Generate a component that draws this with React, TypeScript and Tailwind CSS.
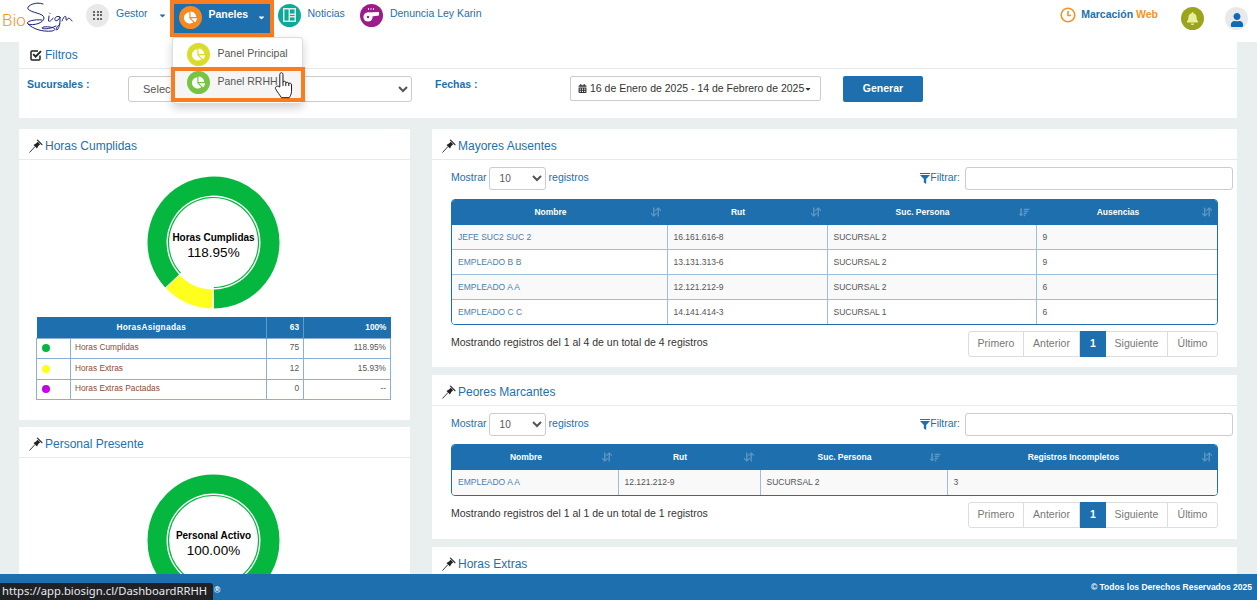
import React from "react";
import { BsArrowDownUp, BsSortDown } from "react-icons/bs";
import { FaChartPie, FaCalendarAlt, FaBell, FaUser, FaCaretDown } from "react-icons/fa";

function pt(a: number, r: number, c: number) {
  const t = (a * Math.PI) / 180;
  return `${(c + r * Math.sin(t)).toFixed(2)} ${(c - r * Math.cos(t)).toFixed(2)}`;
}
function arc(a0: number, a1: number, r: number, c: number) {
  const large = a1 - a0 > 180 ? 1 : 0;
  return `M ${pt(a0, r, c)} A ${r} ${r} 0 ${large} 1 ${pt(a1, r, c)}`;
}

function Pin() {
  return (
    <svg width="14" height="14" viewBox="0 0 14 14" className="text-[#222]" fill="currentColor">
      <path d="M0.5 13.5 L6 7.5" stroke="currentColor" strokeWidth="0.9" fill="none" />
      <path d="M4.5 6 L8 9.5 L9.3 7 L11.2 5.2 L8.7 2.7 L7 4.6 Z" />
      <path d="M7.6 1 L8.6 0.4 L13.6 5.4 L13 6.4 Z" />
    </svg>
  );
}

function CheckBoxIcon() {
  return (
    <svg width="12" height="12" viewBox="0 0 12 12" fill="none" stroke="#222">
      <path d="M10 6.5 V10 Q10 11 9 11 H2 Q1 11 1 10 V3 Q1 2 2 2 H8" strokeWidth="1.5" />
      <path d="M3.2 5.2 L5.6 7.6 L11 2.2" strokeWidth="1.9" />
    </svg>
  );
}

function FilterIcon() {
  return (
    <svg width="10" height="11" viewBox="0 0 10 11" fill="#1d6fad">
      <rect x="0" y="0" width="10" height="1" />
      <path d="M0 2 H10 L6.2 6 V11 L3.8 9.5 V6 Z" />
    </svg>
  );
}

function NewsIcon() {
  return (
    <svg width="13" height="14" viewBox="0 0 13 14">
      <rect x="0" y="0" width="13" height="14" fill="#d8efe9" />
      <rect x="1.5" y="1.5" width="4" height="11" fill="#0fa99a" />
      <rect x="7" y="1.5" width="4.5" height="4" fill="#0fa99a" />
      <rect x="7" y="7" width="4.5" height="1" fill="#0fa99a" />
      <rect x="7" y="9.5" width="4.5" height="3" fill="#0fa99a" />
    </svg>
  );
}

function WhistleIcon() {
  return (
    <svg width="18" height="16" viewBox="0 0 18 16" fill="#fff">
      <circle cx="6" cy="10" r="4.6" />
      <path d="M5 5.6 L17 5 V8.4 L9.5 9.5 Z" />
      <circle cx="6" cy="10" r="1.2" fill="#9c1c8c" />
      <path d="M6.5 1 V3 M9 1 V3 M11.5 1 V3" stroke="#fff" strokeWidth="0.8" />
    </svg>
  );
}

function HandCursor() {
  return (
    <svg width="19" height="28" viewBox="0 0 18 26" fill="#fff" stroke="#111" strokeWidth="0.9" strokeLinejoin="round">
      <path d="M5.5 15 V3.2 C5.5 .8 8.5 .8 8.5 3.2 V10.5 C8.5 9 11.2 9 11.2 10.8 V11.5 C11.2 10 14 10 14 12 C14 10.8 16.6 11 16.6 13 V19 C16.6 22 15 24 14.5 25 H7 C6 23 2.5 19 1.5 16.5 C.8 14.5 3.5 13 5.5 15 Z" />
      <path d="M8.5 10.5 V14 M11.2 11.5 V14 M14 12 V14" fill="none" />
    </svg>
  );
}

function Donut({ label, value, extra }: { label: string; value: string; extra?: number }) {
  const c = 66.5;
  return (
    <div className="relative w-[133px] h-[133px]">
      <svg width="133" height="133" viewBox="0 0 133 133" className="block">
        {extra ? (
          <>
            <path d={arc(181, 180 + extra - 1, 56.5, c)} fill="none" stroke="#ffff1e" strokeWidth="19" />
            <path d={arc(180 + extra, 539.5, 56.5, c)} fill="none" stroke="#06b73f" strokeWidth="19" />
            <path d={arc(180 + extra, 539.5, 45, c)} fill="none" stroke="#06b73f" strokeWidth="1.2" />
          </>
        ) : (
          <>
            <circle cx={c} cy={c} r="56.5" fill="none" stroke="#06b73f" strokeWidth="19" />
            <circle cx={c} cy={c} r="45" fill="none" stroke="#06b73f" strokeWidth="1.2" />
          </>
        )}
      </svg>
      <div className="absolute inset-0 flex flex-col items-center justify-center pt-[7px]">
        <span className="text-[10px] leading-[12px] font-bold text-black whitespace-nowrap">{label}</span>
        <span className="text-[13.5px] leading-[17px] text-black">{value}</span>
      </div>
    </div>
  );
}

function Card({ title, icon, className, head = "h-[31px] pt-[3px]", children }: { title: string; icon?: React.ReactNode; className?: string; head?: string; children?: React.ReactNode }) {
  return (
    <section className={`bg-white ${className ?? ""}`}>
      <div className={`${head} border-b border-[#e7eaec] flex items-center pl-[10px] gap-[2px] text-[12px] text-[#1d6fad]`}>
        <span className="w-[14px] flex justify-center">{icon ?? <Pin />}</span>
        <span>{title}</span>
      </div>
      {children}
    </section>
  );
}

function Circle({ bg, children }: { bg: string; children?: React.ReactNode }) {
  return <span className={`w-[23px] h-[23px] rounded-full flex items-center justify-center shrink-0 ${bg}`}>{children}</span>;
}

function Controls() {
  return (
    <div className="flex items-center justify-between pl-[19px] pr-[4px] h-[23px] text-[10.5px] text-[#1d6fad]">
      <div className="flex items-center">
        <span className="pb-[1px]">Mostrar</span>
        <select className="w-[57px] h-[23px] ml-[2px] mr-[3px] border border-[#ccc] rounded-[3px] bg-white text-[10px] text-[#555] pl-[6px]">
          <option>10</option>
        </select>
        <span className="pb-[1px]">registros</span>
      </div>
      <div className="flex items-center">
        <FilterIcon />
        <span className="mr-[5px] pb-[1px]">Filtrar:</span>
        <div className="w-[268px] h-[23px] border border-[#ccc] rounded-[3px] bg-white" />
      </div>
    </div>
  );
}

function Pager() {
  const items = [
    { t: "Primero", w: "w-[56px]" },
    { t: "Anterior", w: "w-[57px]" },
    { t: "1", w: "w-[26px]", on: true },
    { t: "Siguiente", w: "w-[63px]" },
    { t: "Último", w: "w-[51px]" },
  ];
  return (
    <div className="flex h-[26px] text-[10.5px]">
      {items.map((i) =>
        i.on ? (
          <span key={i.t} className={`${i.w} relative z-10 flex items-center justify-center bg-[#1d6fad] text-white font-bold`}>{i.t}</span>
        ) : (
          <span key={i.t} className={`${i.w} flex items-center justify-center border border-[#ddd] -ml-px first:ml-0 first:rounded-l-[3px] last:rounded-r-[3px] text-[#777] bg-white`}>{i.t}</span>
        )
      )}
    </div>
  );
}

function DataTable({ cols, heads, rows, sortIdx }: { cols: string[]; heads: string[]; rows: string[][]; sortIdx: number }) {
  return (
    <div className="mx-[19px] border border-[#1d6fad] rounded-[4px] overflow-hidden">
      <table className="w-full table-fixed border-collapse text-[8.5px]">
        <colgroup>
          {cols.map((c, i) => <col key={i} className={c} />)}
        </colgroup>
        <thead>
          <tr className="h-[25px] bg-[#1d6fad] text-white">
            {heads.map((h, i) => (
              <th key={h} className="relative font-bold text-center pr-[18px] pb-[1px]">
                {h}
                <span className="absolute right-[6px] top-[7px] text-white opacity-30">
                  {i === sortIdx ? <BsSortDown size={11} strokeWidth={1} /> : <BsArrowDownUp size={10} strokeWidth={1} />}
                </span>
              </th>
            ))}
          </tr>
        </thead>
        <tbody>
          {rows.map((r, i) => (
            <tr key={i} className={`h-[24.75px] ${i % 2 === 0 ? "bg-[#f9f9f9]" : "bg-white"} ${i > 0 ? "border-t border-[#9dbfdb]" : ""}`}>
              {r.map((c, j) => (
                <td key={j} className={`pl-[6px] ${j > 0 ? "border-l border-[#9dbfdb]" : ""} ${j === 0 ? "text-[#4a7fae]" : "text-[#555]"}`}>{c}</td>
              ))}
            </tr>
          ))}
        </tbody>
      </table>
    </div>
  );
}

function Summary() {
  const rows = [
    { dot: "bg-[#06b73f]", n: "Horas Cumplidas", v: "75", p: "118.95%" },
    { dot: "bg-[#ffff1e]", n: "Horas Extras", v: "12", p: "15.93%" },
    { dot: "bg-[#c800e6]", n: "Horas Extras Pactadas", v: "0", p: "--" },
  ];
  return (
    <table className="w-[354px] table-fixed border-collapse text-[8.3px] ml-[18px]">
      <colgroup>
        <col className="w-[34px]" />
        <col className="w-[196px]" />
        <col className="w-[37px]" />
        <col className="w-[87px]" />
      </colgroup>
      <thead>
        <tr className="h-[21px] bg-[#1d6fad] text-white font-bold">
          <td colSpan={2} className="text-center tracking-[0.3px]">HorasAsignadas</td>
          <td className="text-right pr-[4px] border-l border-[#5f9bc9]">63</td>
          <td className="text-right pr-[4px] border-l border-[#5f9bc9]">100%</td>
        </tr>
      </thead>
      <tbody>
        {rows.map((r) => (
          <tr key={r.n} className="h-[20.5px]">
            <td className="border border-[#8ab0d6] pl-[5px]">
              <span className={`block w-[8px] h-[8px] rounded-full ${r.dot}`} />
            </td>
            <td className="border border-[#8ab0d6] pl-[4px] pb-[2px] text-[#8a4b3c]">{r.n}</td>
            <td className="border border-[#8ab0d6] text-right pr-[4px] pb-[2px] text-[#555]">{r.v}</td>
            <td className="border border-[#8ab0d6] text-right pr-[4px] pb-[2px] text-[#555]">{r.p}</td>
          </tr>
        ))}
      </tbody>
    </table>
  );
}

function Logo() {
  return (
    <div className="relative w-[75px] h-[36px] shrink-0">
      <span className="absolute left-[2px] top-[10px] text-[17px] leading-[20px] text-[#f6931e] font-light font-['Roboto',sans-serif]">Bio</span>
      <svg width="76" height="36" viewBox="0 0 76 36" className="absolute left-0 top-0" fill="none" stroke="#1b2170" strokeWidth="1" strokeLinecap="round">
        <path d="M43 4 C 36 1 26 6 28 9 C 31 13 44 13 44 18 C 44 23 33 26 28 24 C 25 22 33 19 42 20" />
        <path d="M28 24 C 33 29 42 32 52 31 C 60 29 50 26 44 27 C 38 28 46 31 56 26" />
        <path d="M49 16 L 48.5 21 C 50 22 52 20 53 18 M 49.5 13 L 50 13.5" />
        <path d="M60 17 C 57 15 54 18 55 20 C 56 22 59 20 60 17 C 60 22 60 27 57 30 C 55 30 57 26 60 24" />
        <path d="M62 21 C 63 18 65 15 66 17 C 66 19 66 21 67 20 C 68 17 70 18 72 21" />
      </svg>
    </div>
  );
}

function Header() {
  return (
    <header className="h-[42px] bg-white flex items-start shrink-0 text-[10.5px] relative">
      <Logo />
      <div className="flex items-center h-[30px] ml-[11px]">
        <Circle bg="bg-[#e9e9e9]">
          <span className="grid grid-cols-3 gap-[1.5px]">
            {Array.from({ length: 9 }).map((_, i) => <span key={i} className="w-[2px] h-[2px] bg-[#666]" />)}
          </span>
        </Circle>
        <span className="ml-[7px] pb-[2px] text-[#1d6fad]">Gestor</span>
        <FaCaretDown size={9} className="ml-[10px] text-[#1d6fad]" />
      </div>
      <div className="relative ml-[3px] w-[104px] h-[37px] border-[4px] border-[#f97c1e] shrink-0">
        <div className="h-full bg-[#1d6fad] flex items-center pb-[3px] pl-[5px] text-white font-bold">
          <Circle bg="bg-[#f6891f]"><FaChartPie size={13} className="text-white" /></Circle>
          <span className="ml-[7px] pb-[4px]">Paneles</span>
          <FaCaretDown size={9} className="ml-[9px]" />
        </div>
        <div className="absolute left-[-2px] top-[33px] z-20 w-[131px] h-[67px] bg-white border border-[#ddd] rounded-[3px] shadow-[0_4px_10px_rgba(0,0,0,0.18)] font-normal text-[#555]">
          <div className="h-[32px] flex items-center pl-[14px]">
            <Circle bg="bg-[#d9dc2b]"><FaChartPie size={13} className="text-white" /></Circle>
            <span className="ml-[8px]">Panel Principal</span>
          </div>
          <div className="h-[30px] flex items-center pl-[14px] bg-[#f5f5f5] pb-[6px]">
            <Circle bg="bg-[#76c442]"><FaChartPie size={13} className="text-white" /></Circle>
            <span className="ml-[8px]">Panel RRHH</span>
          </div>
        </div>
        <div className="absolute left-[-3px] top-[63px] z-30 w-[134px] h-[35px] border-[4px] border-[#f97c1e]" />
        <div className="absolute left-[100px] top-[67px] z-40">
          <HandCursor />
        </div>
      </div>
      <div className="flex items-center h-[30px] ml-[4px]">
        <Circle bg="bg-[#0fa99a]"><NewsIcon /></Circle>
        <span className="ml-[7px] pb-[2px] text-[#1d6fad]">Noticias</span>
      </div>
      <div className="flex items-center h-[30px] ml-[15px]">
        <Circle bg="bg-[#9c1c8c]"><WhistleIcon /></Circle>
        <span className="ml-[7px] pb-[2px] text-[#1d6fad]">Denuncia Ley Karin</span>
      </div>
      <div className="ml-auto flex items-start">
        <div className="flex items-center h-[30px]">
          <svg width="16" height="16" viewBox="0 0 16 16" fill="none" stroke="#f6931e" strokeWidth="1.6">
            <circle cx="8" cy="8" r="6.8" />
            <path d="M8 4 V8.5 H11" />
          </svg>
          <span className="ml-[5px] font-bold text-[#1d6fad]">Marcación <span className="text-[#f6931e]">Web</span></span>
        </div>
        <div className="ml-[23px] mt-[7px]">
          <Circle bg="bg-[#9aa51d]"><FaBell size={13} className="text-[#e8ef9a]" /></Circle>
        </div>
        <div className="ml-[21px] mr-[9px] mt-[7px]">
          <Circle bg="bg-[#e9e9e9]"><FaUser size={14} className="text-[#0d6cb5] mt-[2px]" /></Circle>
        </div>
      </div>
    </header>
  );
}

export default function App() {
  return (
    <div className="w-[1257px] h-[600px] overflow-hidden flex flex-col bg-[#e9eeee] font-['Liberation_Sans',Arial,sans-serif]">
      <Header />
      <main className="flex-1 min-h-0 overflow-hidden pl-[19px] pr-[20px]">
        <Card title="Filtros" icon={<CheckBoxIcon />} head="h-[27px]" className="h-[76px]">
          <div className="flex items-start pt-[7px] text-[10.5px] font-bold text-[#1d6fad]">
            <span className="ml-[8px] w-[101px] mt-[1px]">Sucursales :</span>
            <select className="w-[284px] h-[26px] border border-[#ccc] rounded-[3px] bg-white text-[11px] font-normal text-[#555] pl-[10px]">
              <option>Seleccione</option>
            </select>
            <span className="ml-[23px] w-[135px] mt-[1px]">Fechas :</span>
            <div className="w-[251px] h-[25px] border border-[#ccc] rounded-[2px] flex items-center pl-[7px] text-[10.5px] font-normal text-[#333]">
              <FaCalendarAlt size={9} />
              <span className="ml-[3px] whitespace-nowrap">16 de Enero de 2025 - 14 de Febrero de 2025</span>
              <FaCaretDown size={8} />
            </div>
            <button className="ml-[22px] w-[80px] h-[26px] bg-[#1d6fad] rounded-[2px] text-white text-[10.5px] font-bold">Generar</button>
          </div>
        </Card>
        <div className="flex mt-[11px] gap-[22px]">
          <div className="w-[391px] shrink-0 flex flex-col gap-[7px]">
            <Card title="Horas Cumplidas" className="h-[291px]">
              <div className="pt-[16px] pl-[128px]">
                <Donut label="Horas Cumplidas" value="118.95%" extra={47} />
              </div>
              <div className="mt-[8px] -ml-px">
                <Summary />
              </div>
            </Card>
            <Card title="Personal Presente" className="h-[200px]">
              <div className="pt-[16px] pl-[128px]">
                <Donut label="Personal Activo" value="100.00%" />
              </div>
            </Card>
          </div>
          <div className="w-[805px] shrink-0 flex flex-col gap-[8px]">
            <Card title="Mayores Ausentes" className="h-[238px]">
              <div className="pt-[7px]"><Controls /></div>
              <div className="mt-[9px]">
                <DataTable
                  cols={["w-[215px]", "w-[160px]", "w-[209px]", "w-[182px]"]}
                  sortIdx={2}
                  heads={["Nombre", "Rut", "Suc. Persona", "Ausencias"]}
                  rows={[
                    ["JEFE SUC2 SUC 2", "16.161.616-8", "SUCURSAL 2", "9"],
                    ["EMPLEADO B B", "13.131.313-6", "SUCURSAL 2", "9"],
                    ["EMPLEADO A A", "12.121.212-9", "SUCURSAL 2", "6"],
                    ["EMPLEADO C C", "14.141.414-3", "SUCURSAL 1", "6"],
                  ]}
                />
              </div>
              <div className="flex items-center justify-between px-[19px] mt-[6px]">
                <span className="text-[10.5px] pb-[2px] text-[#333]">Mostrando registros del 1 al 4 de un total de 4 registros</span>
                <Pager />
              </div>
            </Card>
            <Card title="Peores Marcantes" className="h-[164px]">
              <div className="pt-[7px]"><Controls /></div>
              <div className="mt-[8px]">
                <DataTable
                  cols={["w-[166px]", "w-[142px]", "w-[187px]", "w-[271px]"]}
                  sortIdx={2}
                  heads={["Nombre", "Rut", "Suc. Persona", "Registros Incompletos"]}
                  rows={[["EMPLEADO A A", "12.121.212-9", "SUCURSAL 2", "3"]]}
                />
              </div>
              <div className="flex items-center justify-between px-[19px] mt-[6px]">
                <span className="text-[10.5px] pb-[2px] text-[#333]">Mostrando registros del 1 al 1 de un total de 1 registros</span>
                <Pager />
              </div>
            </Card>
            <Card title="Horas Extras" className="h-[60px]" />
          </div>
        </div>
      </main>
      <footer className="relative h-[26px] shrink-0 bg-[#1d6fad] flex items-center justify-between text-white text-[8.5px] font-bold pl-[214px] pr-[5px]">
        <span className="pt-[6px]">®</span>
        <span>© Todos los Derechos Reservados 2025</span>
        <div className="absolute left-0 bottom-0 h-[17px] w-[213px] bg-[#202124] rounded-tr-[3px] flex items-center pl-[2px] text-[11.25px] font-normal text-[#e8eaed] whitespace-nowrap font-['Noto_Sans',sans-serif]">
          https://app.biosign.cl/DashboardRRHH
        </div>
      </footer>
    </div>
  );
}
